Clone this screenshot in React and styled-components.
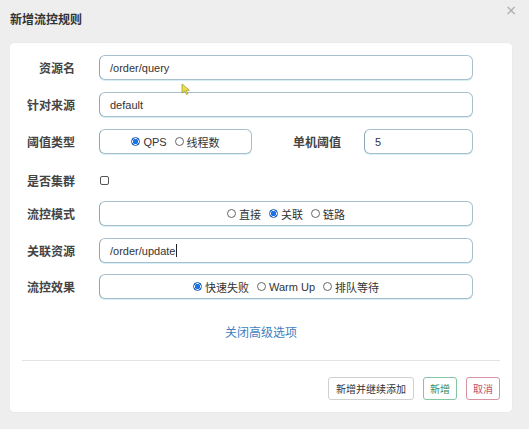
import React from "react";
import styled, { createGlobalStyle } from "styled-components";

const Global = createGlobalStyle`
  html, body { margin: 0; padding: 0; background: #eeeeee; }
  body { font-family: "Liberation Sans", Arial, "Noto Sans CJK SC", sans-serif; }
  * { box-sizing: border-box; }
`;

const Page = styled.div`
  position: relative;
  width: 529px;
  height: 429px;
  background: #eeeeee;
`;

const Header = styled.div`
  height: 43px;
  display: flex;
  align-items: flex-start;
  justify-content: space-between;
  padding: 11px 10px 0 10px;
`;

const Title = styled.div`
  font-family: "Noto Sans CJK SC", sans-serif;
  font-weight: 700;
  font-size: 12px;
  line-height: 16px;
  color: #333;
`;

const Close = styled.div`
  position: absolute;
  right: 12px;
  top: 2px;
  font-size: 14px;
  color: #aaa;
  font-family: "DejaVu Sans", sans-serif;
`;

const Card = styled.div`
  margin: 0 17px 0 10px;
  background: #fff;
  border-radius: 4px;
  box-shadow: 0 0 1px rgba(0, 0, 0, 0.15);
  padding: 12px 12px 12px 12px;
`;

const Form = styled.div`
  padding-right: 27px;
`;

const Row = styled.div`
  display: flex;
  align-items: center;
  height: ${(p) => p.h || 25}px;
  margin-bottom: ${(p) => (p.mb !== undefined ? p.mb : 12)}px;
`;

const Label = styled.div`
  width: ${(p) => p.w || 53}px;
  flex-shrink: 0;
  margin-right: ${(p) => p.mr || 24}px;
  text-align: right;
  font-family: "Noto Sans CJK SC", sans-serif;
  font-weight: 700;
  font-size: 12px;
  color: #444;
  white-space: nowrap;
`;

const Box = styled.div`
  flex: ${(p) => (p.w ? "0 0 auto" : "1")};
  width: ${(p) => (p.w ? `${p.w}px` : "auto")};
  height: 100%;
  border: 1px solid #a9bfcd;
  border-left-color: #8ea6b6;
  border-radius: 6px;
  box-shadow: 0 1px 0 rgba(160, 220, 235, 0.45);
  display: flex;
  align-items: center;
  justify-content: ${(p) => (p.center ? "center" : "flex-start")};
  padding: 0 10px;
  font-size: 11px;
  color: #333;
  background: #fff;
`;

const Caret = styled.span`
  display: inline-block;
  width: 1px;
  height: 13px;
  background: #222;
  margin-left: 1px;
`;

const RadioItem = styled.span`
  display: inline-flex;
  align-items: center;
  margin-right: ${(p) => (p.last ? 0 : 8)}px;
  font-family: "Liberation Sans", Arial, "Noto Sans CJK SC", sans-serif;
  font-size: 11px;
  color: #333;
`;

const Dot = styled.span`
  width: 9px;
  height: 9px;
  border-radius: 50%;
  margin-right: 3px;
  border: 1px solid ${(p) => (p.on ? "#1d5fb3" : "#666")};
  background: ${(p) =>
    p.on ? "radial-gradient(circle, #1a73e8 0 2.6px, #fff 3px 3.3px, #1a73e8 3.6px)" : "#fff"};
  flex-shrink: 0;
`;

const Check = styled.span`
  width: 9px;
  height: 9px;
  border: 1px solid #555;
  border-radius: 2px;
  margin-left: 1px;
`;

const LinkLine = styled.div`
  text-align: center;
  margin-top: 25px;
  height: 16px;
  line-height: 16px;
`;

const Link = styled.a`
  font-family: "Noto Sans CJK SC", sans-serif;
  font-size: 12px;
  color: #3f7fbf;
  text-decoration: none;
`;

const Divider = styled.div`
  height: 1px;
  background: #e3e3e3;
  margin-top: 20px;
`;

const Footer = styled.div`
  display: flex;
  justify-content: flex-end;
  gap: 9px;
  margin-top: 16px;
`;

const Btn = styled.button`
  height: 23px;
  padding: 0 ${(p) => p.px || 7}px;
  background: #fff;
  border: 1px solid ${(p) => p.bc || "#d0d0d0"};
  border-radius: 3px;
  color: ${(p) => p.c || "#333"};
  font-family: "Noto Sans CJK SC", sans-serif;
  font-size: 10px;
  line-height: 21px;
`;

const Cursor = styled.svg`
  position: absolute;
  left: 181px;
  top: 83px;
`;

const Radio = ({ on, children, last }) => (
  <RadioItem last={last}>
    <Dot on={on} />
    {children}
  </RadioItem>
);

export default function App() {
  return (
    <Page>
      <Global />
      <Header>
        <Title>新增流控规则</Title>
      </Header>
      <Close>×</Close>
      <Card>
        <Form>
          <Row>
            <Label>资源名</Label>
            <Box>/order/query</Box>
          </Row>
          <Row>
            <Label>针对来源</Label>
            <Box>default</Box>
          </Row>
          <Row>
            <Label>阈值类型</Label>
            <Box w={153} center>
              <Radio on>QPS</Radio>
              <Radio last>线程数</Radio>
            </Box>
            <Label w={89} mr={23}>单机阈值</Label>
            <Box>5</Box>
          </Row>
          <Row h={28} mb={7}>
            <Label>是否集群</Label>
            <Check />
          </Row>
          <Row>
            <Label>流控模式</Label>
            <Box center>
              <Radio>直接</Radio>
              <Radio on>关联</Radio>
              <Radio last>链路</Radio>
            </Box>
          </Row>
          <Row mb={11}>
            <Label>关联资源</Label>
            <Box>
              /order/update
              <Caret />
            </Box>
          </Row>
          <Row mb={0}>
            <Label>流控效果</Label>
            <Box center>
              <Radio on>快速失败</Radio>
              <Radio>Warm Up</Radio>
              <Radio last>排队等待</Radio>
            </Box>
          </Row>
        </Form>
        <LinkLine>
          <Link>关闭高级选项</Link>
        </LinkLine>
        <Divider />
        <Footer>
          <Btn>新增并继续添加</Btn>
          <Btn bc="#82c6a4" c="#3b8a5c" px={6}>新增</Btn>
          <Btn bc="#d693a3" c="#c2506c" px={6}>取消</Btn>
        </Footer>
      </Card>
      <Cursor width="10" height="12" viewBox="0 0 10 12">
        <path d="M1 1 L1 10 L3.5 8 L5.5 11.5 L7 10.7 L5.2 7.4 L8.5 7.2 Z" fill="#e8e04a" stroke="#8a8420" strokeWidth="0.6" />
      </Cursor>
    </Page>
  );
}
